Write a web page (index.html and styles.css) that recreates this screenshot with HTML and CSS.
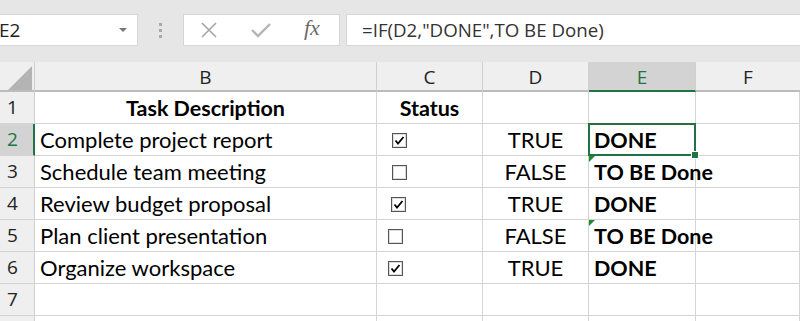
FILE: index.html
```html
<!DOCTYPE html>
<html>
<head>
<meta charset="utf-8">
<link rel="stylesheet" href="styles.css">
</head>
<body>
<div class="app">
  <div class="toolbar">
    <div class="namebox"><span class="nb-text">E2</span><span class="nb-arrow"></span></div>
    <div class="grip"><i></i><i></i><i></i></div>
    <div class="fxbox">
      <svg class="ic-x" width="18" height="18" viewBox="0 0 18 18"><path d="M2 2 L16 16 M16 2 L2 16" stroke="#a6a6a6" stroke-width="1.6" fill="none"/></svg>
      <svg class="ic-check" width="22" height="18" viewBox="0 0 22 18"><path d="M2 9 L8 15 L20 3" stroke="#b5b5b5" stroke-width="2.4" fill="none"/></svg>
      <span class="fx">fx</span>
    </div>
    <div class="formula">=IF(D2,"DONE",TO BE Done)</div>
  </div>
  <div class="sheet">
    <div class="hd corner"><span class="tri"></span></div>
    <div class="hd col">B</div>
    <div class="hd col">C</div>
    <div class="hd col">D</div>
    <div class="hd col col-sel">E</div>
    <div class="hd col col-last">F</div>

    <div class="hd row">1</div>
    <div class="c bold center">Task Description</div>
    <div class="c bold center">Status</div>
    <div class="c"></div>
    <div class="c"></div>
    <div class="c"></div>

    <div class="hd row row-sel">2</div>
    <div class="c">Complete project report</div>
    <div class="c cbcell cb1"><svg class="cb" width="15" height="15" viewBox="0 0 15 15"><rect x="0.5" y="0.5" width="14" height="14" fill="#fff" stroke="#555"/><rect x="1.5" y="1.5" width="12" height="12" fill="none" stroke="#ddd"/><path d="M3.5 7.5 L6 10.5 L11.5 4" stroke="#000" stroke-width="1.8" fill="none"/></svg></div>
    <div class="c center">TRUE</div>
    <div class="c bold sel">DONE<span class="selbox"></span><span class="handle"></span></div>
    <div class="c"></div>

    <div class="hd row">3</div>
    <div class="c">Schedule team meeting</div>
    <div class="c cbcell cb1"><svg class="cb" width="15" height="15" viewBox="0 0 15 15"><rect x="0.5" y="0.5" width="14" height="14" fill="#fff" stroke="#555"/><rect x="1.5" y="1.5" width="12" height="12" fill="none" stroke="#ddd"/></svg></div>
    <div class="c center">FALSE</div>
    <div class="c bold nowrap warn"><span class="gtri"></span>TO BE Done</div>
    <div class="c"></div>

    <div class="hd row">4</div>
    <div class="c">Review budget proposal</div>
    <div class="c cbcell cb2"><svg class="cb" width="15" height="15" viewBox="0 0 15 15"><rect x="0.5" y="0.5" width="14" height="14" fill="#fff" stroke="#555"/><rect x="1.5" y="1.5" width="12" height="12" fill="none" stroke="#ddd"/><path d="M3.5 7.5 L6 10.5 L11.5 4" stroke="#000" stroke-width="1.8" fill="none"/></svg></div>
    <div class="c center">TRUE</div>
    <div class="c bold">DONE</div>
    <div class="c"></div>

    <div class="hd row">5</div>
    <div class="c">Plan client presentation</div>
    <div class="c cbcell cb3"><svg class="cb" width="15" height="15" viewBox="0 0 15 15"><rect x="0.5" y="0.5" width="14" height="14" fill="#fff" stroke="#555"/><rect x="1.5" y="1.5" width="12" height="12" fill="none" stroke="#ddd"/></svg></div>
    <div class="c center">FALSE</div>
    <div class="c bold nowrap warn"><span class="gtri"></span>TO BE Done</div>
    <div class="c"></div>

    <div class="hd row">6</div>
    <div class="c">Organize workspace</div>
    <div class="c cbcell cb3"><svg class="cb" width="15" height="15" viewBox="0 0 15 15"><rect x="0.5" y="0.5" width="14" height="14" fill="#fff" stroke="#555"/><rect x="1.5" y="1.5" width="12" height="12" fill="none" stroke="#ddd"/><path d="M3.5 7.5 L6 10.5 L11.5 4" stroke="#000" stroke-width="1.8" fill="none"/></svg></div>
    <div class="c center">TRUE</div>
    <div class="c bold">DONE</div>
    <div class="c"></div>

    <div class="hd row">7</div>
    <div class="c"></div>
    <div class="c"></div>
    <div class="c"></div>
    <div class="c"></div>
    <div class="c"></div>

    <div class="hd row"></div>
    <div class="c"></div>
    <div class="c"></div>
    <div class="c"></div>
    <div class="c"></div>
    <div class="c"></div>
  </div>
</div>
</body>
</html>
```
FILE: styles.css
```css
html, body {
  margin: 0;
  padding: 0;
  background: #fff;
}
.app {
  width: 800px;
  height: 321px;
  overflow: hidden;
  font-family: "Open Sans", "Noto Sans", sans-serif;
}
.toolbar {
  height: 62px;
  background: #e6e6e6;
  display: flex;
  align-items: flex-start;
  padding-top: 14px;
  box-sizing: border-box;
}
.namebox {
  width: 138px;
  height: 32px;
  background: #fff;
  border: 1px solid #d6d6d6;
  border-left: none;
  box-sizing: border-box;
  display: flex;
  align-items: center;
  justify-content: space-between;
  padding-right: 10px;
}
.nb-text {
  font-size: 19px;
  color: #222;
  margin-left: -1px;
}
.nb-arrow {
  width: 0;
  height: 0;
  border-left: 4px solid transparent;
  border-right: 4px solid transparent;
  border-top: 4px solid #777;
}
.grip {
  width: 45px;
  display: flex;
  flex-direction: column;
  align-items: center;
  gap: 3px;
  padding-top: 9px;
  box-sizing: border-box;
  height: 32px;
}
.grip i {
  display: block;
  width: 3px;
  height: 3px;
  background: #a8a8a8;
}
.fxbox {
  width: 157px;
  height: 32px;
  background: #fff;
  border: 1px solid #d6d6d6;
  box-sizing: border-box;
  display: flex;
  align-items: center;
  position: relative;
}
.ic-x { margin-left: 16px; }
.ic-check { margin-left: 32px; }
.fx {
  font-family: "Liberation Serif", "DejaVu Serif", serif;
  font-style: italic;
  font-size: 22px;
  color: #6a6a6a;
  margin-left: 32px;
  margin-top: -4px;
}
.formula {
  flex: 1;
  margin-left: 6px;
  height: 32px;
  background: #fff;
  border: 1px solid #d6d6d6;
  border-right: none;
  box-sizing: border-box;
  font-size: 18.7px;
  color: #333;
  padding-left: 15px;
  line-height: 29px;
  white-space: nowrap;
}
.sheet {
  display: grid;
  grid-template-columns: 35px 342px 106px 106px 107px 104px;
  grid-template-rows: 30px repeat(8, 32px);
}
.hd {
  background: #efefef;
  box-sizing: border-box;
  color: #222;
}
.col {
  border-bottom: 2px solid #bcbcbc;
  border-right: 1px solid #d0d0d0;
  text-align: center;
  font-size: 19px;
  line-height: 30px;
}
.col-last { border-right: none; }
.col-sel {
  background: #d3d3d3;
  color: #217346;
  border-bottom: 2px solid #217346;
}
.corner {
  border-bottom: 2px solid #bcbcbc;
  border-right: 1px solid #d0d0d0;
  position: relative;
}
.tri {
  position: absolute;
  left: 8px;
  top: 4px;
  width: 0;
  height: 0;
  border-left: 24px solid transparent;
  border-bottom: 24px solid #b4b4b4;
}
.row {
  border-right: 1px solid #d0d0d0;
  border-bottom: 1px solid #d4d4d4;
  font-size: 19px;
  line-height: 31px;
  padding-left: 7px;
}
.row-sel {
  background: #d3d3d3;
  color: #217346;
  border-right: 2px solid #217346;
}
.c {
  border-right: 1px solid #d4d4d4;
  border-bottom: 1px solid #d4d4d4;
  box-sizing: border-box;
  font-family: "Lato", "Open Sans", sans-serif;
  font-size: 22px;
  line-height: 32px;
  padding-left: 5px;
  color: #000;
  position: relative;
  white-space: nowrap;
}
.bold { font-weight: bold; font-size: 21.5px; }
.center { text-align: center; padding-left: 0; }
.nowrap { overflow: visible; z-index: 2; }
.cbcell {
  display: flex;
  align-items: center;
}
.cb { display: block; }
.cb1 { padding-left: 15px; padding-top: 1px; }
.cb2 { padding-left: 14px; padding-top: 1px; }
.cb3 { padding-left: 11px; padding-top: 1px; }
.selbox {
  position: absolute;
  left: -1px;
  top: -1px;
  right: -1px;
  bottom: -1px;
  border: 2px solid #217346;
}
.handle {
  position: absolute;
  right: -4px;
  bottom: -4px;
  width: 6px;
  height: 6px;
  background: #217346;
  border: 1px solid #fff;
  z-index: 3;
}
.gtri {
  position: absolute;
  left: 0;
  top: 0;
  width: 0;
  height: 0;
  border-right: 6px solid transparent;
  border-top: 6px solid #1f8a2c;
}
```
